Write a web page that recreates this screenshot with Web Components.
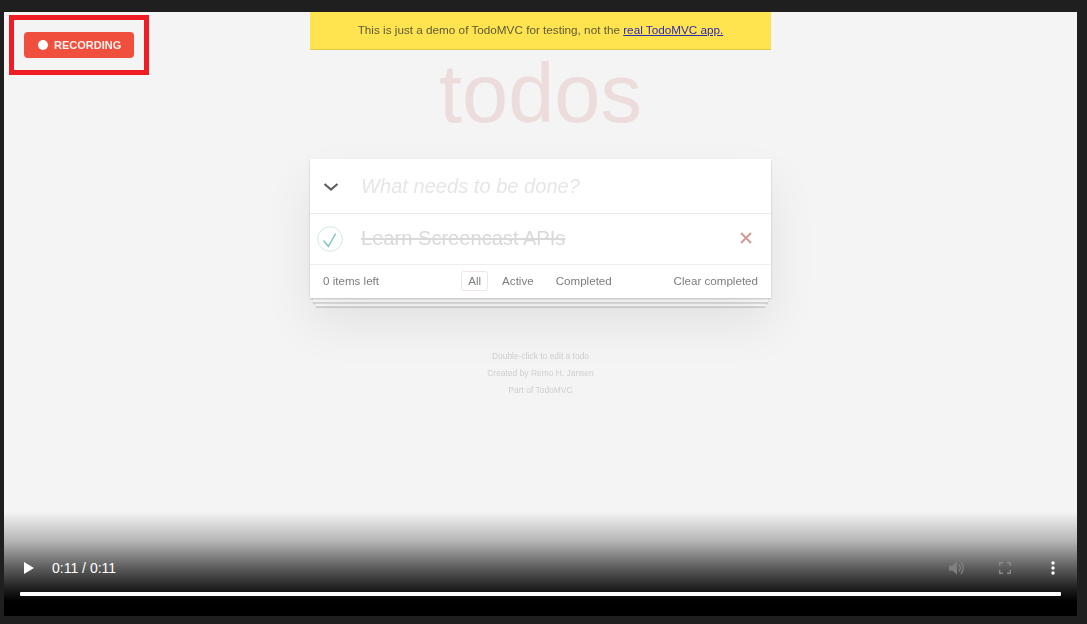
<!DOCTYPE html>
<html lang="en">
<head>
<meta charset="utf-8">
<title>Recording</title>
<style>
html,body{margin:0;height:100%;background:#1f1f1f;overflow:hidden}
body{font-family:"Liberation Sans",Arial,sans-serif}
</style>
</head>
<body>
<video-frame>
  <rec-badge slot="overlay"></rec-badge>
  <video-controls slot="overlay"></video-controls>
  <demo-banner></demo-banner>
  <todo-app></todo-app>
  <info-footer></info-footer>
</video-frame>
<script>
function def(name, html){
  customElements.define(name, class extends HTMLElement{
    constructor(){super();this.attachShadow({mode:'open'}).innerHTML=html;}
  });
}
def('video-frame',`<style>
:host{display:block;position:absolute;inset:12px 10px 8px 4px;background:#f4f4f4;overflow:hidden}
.page{display:flex;flex-direction:column;align-items:center;height:100%;filter:blur(.55px)}
</style><div class="page"><slot></slot></div><slot name="overlay"></slot>`);
def('demo-banner',`<style>
:host{display:block;box-sizing:border-box;width:461px;height:38px;background:#ffe44f;border-bottom:1px solid #dcc84c;
font:11.72px/36px "Liberation Sans",Arial,sans-serif;color:#5c5a38;text-align:center;flex:none}
a{color:#2f2ab0;text-decoration:underline}
</style>This is just a demo of TodoMVC for testing, not the <a href="#">real TodoMVC app.</a>`);
def('todo-app',`<style>
:host{display:block;width:461px;flex:none;font-family:"Liberation Sans",Arial,sans-serif}
h1{margin:0;padding-top:1px;box-sizing:border-box;height:109px;font-size:83px;line-height:86px;font-weight:400;color:#ecdcdc;text-align:center}
.wrap{position:relative;z-index:0}
.stack{position:relative;background:#fff;box-shadow:0 1px 2px rgba(0,0,0,.22),0 25px 50px rgba(0,0,0,.08)}
.stack::before,.stack::after{content:"";position:absolute;background:#fff;z-index:-1;border-bottom:1px solid #d8d8d8;box-shadow:0 1px 1px rgba(0,0,0,.12)}
.stack::after{left:3px;right:3px;bottom:-5px;height:5px}
.stack::before{left:6px;right:6px;bottom:-9px;height:9px}
.new{display:flex;align-items:center;height:54px;border-bottom:1px solid #e9e9e9}
.chev{flex:none;width:51px;padding:2px 0 0 13px;box-sizing:border-box;display:flex}
.ph{font-size:20.1px;font-style:italic;color:#e6e6e6}
.item{display:flex;align-items:center;height:50px;border-bottom:1px solid #ededed}
.tick{flex:none;width:51px;padding-left:5.5px;box-sizing:border-box;display:flex}
.txt{flex:1;font-size:20.1px;color:#d9d9d9;text-decoration:line-through;padding-bottom:2px}
.x{flex:none;margin:0 18px 3px 0;display:flex}
.foot{display:grid;grid-template-columns:1fr auto 1fr;align-items:center;height:33px;padding:0 13px 2px;box-sizing:border-box;font-size:11.6px;color:#7d7d7d}
.filters{display:flex;gap:7px;align-items:center;margin-left:-1px}
.filters span{padding:3px 6px;border:1px solid transparent;border-radius:3px;line-height:12px}
.filters span:first-child{border-color:#f1e6e6}
.filters span:last-child{margin-left:1px}
.clr{text-align:right}
</style>
<h1>todos</h1>
<div class="wrap"><div class="stack">
  <div class="new"><span class="chev"><svg width="16" height="10" viewBox="0 0 16 10"><path d="M1.500 2 8 7.500 14.500 2" fill="none" stroke="#606060" stroke-width="2.200"/></svg></span><span class="ph">What needs to be done?</span></div>
  <div class="item"><span class="tick"><svg width="28" height="28" viewBox="0 0 28 28"><circle cx="14" cy="14" r="12.300" fill="none" stroke="#cfe9e5" stroke-width="1"/><path d="M7.500 15.500 12.300 21.500 19.700 8.500" fill="none" stroke="#7ccabb" stroke-width="1.500"/></svg></span><span class="txt">Learn Screencast APIs</span><span class="x"><svg width="14" height="14" viewBox="0 0 14 14"><path d="M2 2 12 12M12 2 2 12" stroke="#d29a96" stroke-width="2"/></svg></span></div>
  <div class="foot"><span>0 items left</span><span class="filters"><span>All</span><span>Active</span><span>Completed</span></span><span class="clr">Clear completed</span></div>
</div></div>`);
def('info-footer',`<style>
:host{display:block;margin-top:50px;flex:none;font:8.45px/17px "Liberation Sans",Arial,sans-serif;color:#cfcfcf;text-align:center}
p{margin:0}
</style><p>Double-click to edit a todo</p><p>Created by Remo H. Jansen</p><p>Part of TodoMVC</p>`);
def('rec-badge',`<style>
:host{display:block;position:absolute;left:5px;top:3px;box-sizing:border-box;width:140px;height:60px;border:5px solid #ee1c25;padding:12px 10px}
.b{display:flex;align-items:center;box-sizing:border-box;height:26px;width:110px;background:#ef4f3c;border-radius:4px;padding-left:14px;gap:6px;
font:bold 11px "Liberation Sans",Arial,sans-serif;color:#fff4f0;filter:blur(.35px)}
i{width:10px;height:10px;border-radius:50%;background:#fff;flex:none}
</style><div class="b"><i></i><span>RECORDING</span></div>`);
def('video-controls',`<style>
:host{display:block;position:absolute;left:0;right:0;bottom:0;height:104px;box-sizing:border-box;padding-top:44px;
background:linear-gradient(rgba(0,0,0,0),rgba(0,0,0,.26) 28%,rgba(0,0,0,.6) 52%,rgba(0,0,0,.88) 74%,#000 86%);
color:#fff;font:14px "Liberation Sans",Arial,sans-serif}
.row{display:flex;align-items:center;height:24px;padding:0 16px 0 20px}
.play{display:flex;margin-right:18px}
.t{flex:1}
.ic{display:flex;width:16px;justify-content:center}
.bar{height:4px;margin:12px 16px 0;background:#fff;border-radius:1px}
</style>
<div class="row">
<span class="play"><svg width="10" height="12" viewBox="0 0 10 12"><path d="M0 0 10 6 0 12Z" fill="#fff"/></svg></span>
<span class="t">0:11 / 0:11</span>
<span class="ic" style="margin-right:32px"><svg width="16" height="16" viewBox="0 0 16 16"><path d="M0 5.500H3.500L8 1.500V14.500L3.500 10.500H0Z" fill="#7f7f7f"/><path d="M10 4.500Q12.500 8 10 11.500" fill="none" stroke="#7f7f7f" stroke-width="1.500"/><path d="M12 2Q16.500 8 12 14" fill="none" stroke="#7f7f7f" stroke-width="1.300"/></svg></span>
<span class="ic" style="margin-right:32px"><svg width="12" height="12" viewBox="0 0 12 12"><path d="M.7 4V.7H4M8 .7H11.300V4M11.300 8V11.300H8M4 11.300H.7V8" fill="none" stroke="#8a8a8a" stroke-width="1.400"/></svg></span>
<span class="ic"><svg width="4" height="14" viewBox="0 0 4 14"><circle cx="2" cy="2" r="1.700" fill="#fff"/><circle cx="2" cy="7" r="1.700" fill="#fff"/><circle cx="2" cy="12" r="1.700" fill="#fff"/></svg></span>
</div>
<div class="bar"></div>`);
</script>
</body>
</html>
